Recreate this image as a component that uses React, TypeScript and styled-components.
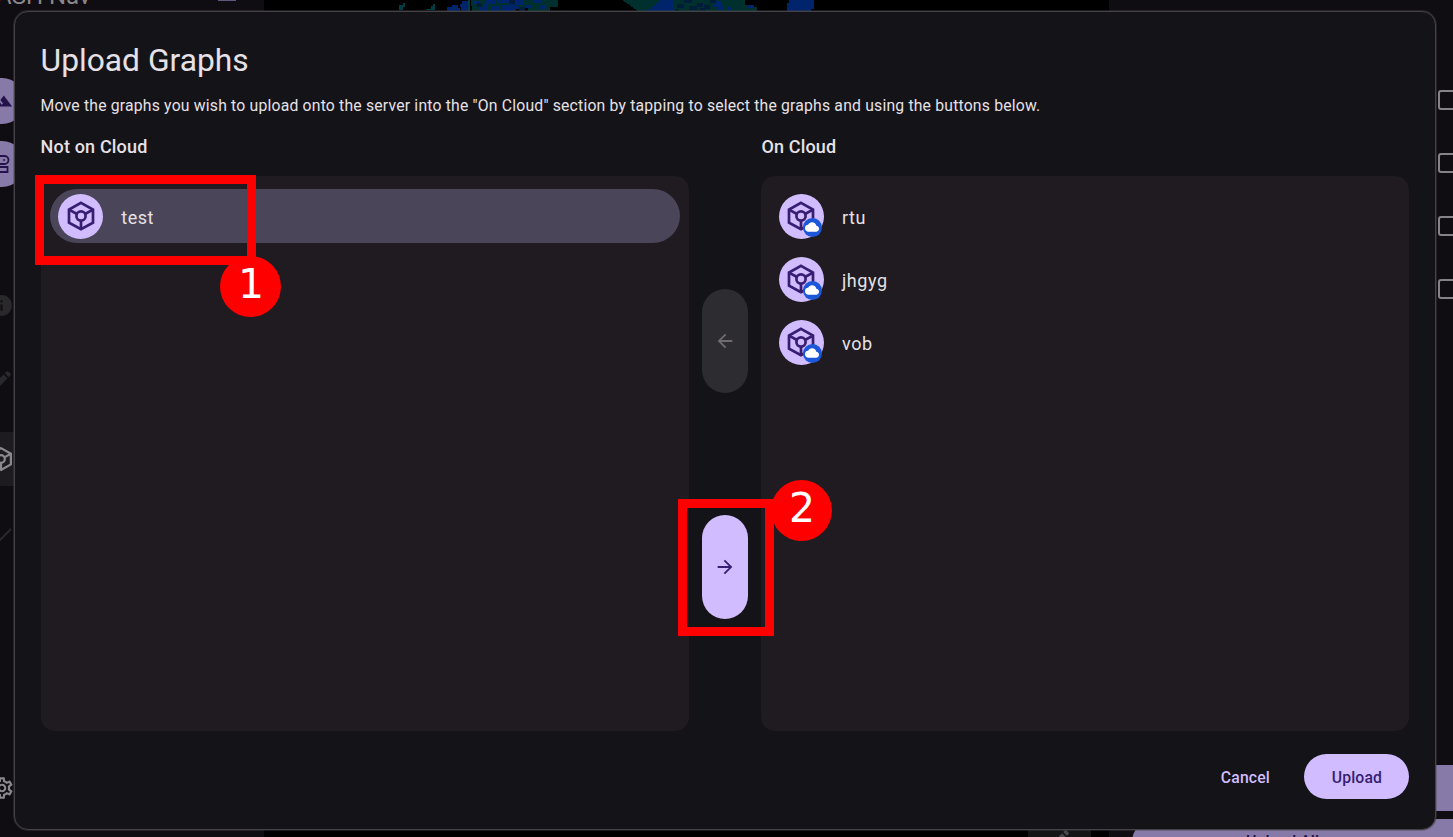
import React from "react";
import styled, { createGlobalStyle, css } from "styled-components";
import { MdCloud, MdEdit, MdInfo, MdLandscape, MdOutlineSettings, MdArrowBack, MdArrowForward } from "react-icons/md";

const GlobalStyle = createGlobalStyle`
  * { box-sizing: border-box; }
  html, body { margin: 0; background: #000; overflow: hidden; }
  body { font-family: Roboto, "Liberation Sans", sans-serif; color: #e6e1e6; }
`;

const Screen = styled.div`
  position: relative;
  width: 1453px;
  height: 837px;
  overflow: hidden;
  display: grid;
  grid-template-columns: 264px 845px 344px;
  grid-template-rows: 837px;
  background: #000;
`;

/* ---- Dimmed application behind the dialog ---- */

const Rail = styled.aside`
  display: flex;
  flex-direction: column;
  background: #0f0d11;
  overflow: hidden;
`;

const RailHeader = styled.header`
  display: flex;
  justify-content: space-between;
  align-items: flex-start;
  flex: none;
  height: 78px;
  padding-right: 28px;
`;

const AppName = styled.div`
  margin: -18px 0 0 -4px;
  font-size: 24px;
  line-height: 28px;
  color: #8a878b;
`;

const HeaderMark = styled.div`
  width: 18px;
  height: 1px;
  background: #605680;
`;

const RailSlot = styled.div<{ $h: number; $active?: boolean; $tone: string }>`
  display: flex;
  align-items: center;
  height: ${(p) => p.$h}px;
  color: ${(p) => p.$tone};
  background: ${(p) => (p.$active ? "#1d1b1f" : "transparent")};
  flex: none;
  svg { margin-left: ${(p) => (p.$active ? -13 : -11)}px; }
`;

const RailGap = styled.div<{ $h: number }>`
  height: ${(p) => p.$h}px;
  flex: none;
`;

const RailAvatar = styled.div`
  display: flex;
  align-items: center;
  justify-content: center;
  flex: none;
  width: 46px;
  height: 46px;
  margin: 0 0 17px -21px;
  border-radius: 50%;
  background: #877aa8;
  color: #24134a;
`;

const MapArea = styled.main`
  display: flex;
  flex-direction: column;
  justify-content: space-between;
  background: #000;
`;

const MapFooter = styled.div`
  display: flex;
  justify-content: flex-end;
  height: 8px;
  padding-right: 18px;
`;

const EditTab = styled.div`
  width: 63px;
  height: 8px;
  overflow: hidden;
  display: flex;
  justify-content: center;
  align-items: flex-start;
  background: #151515;
  color: #48484a;
  svg { flex: none; margin-top: -2px; }
`;

const SidePanel = styled.aside`
  display: flex;
  flex-direction: column;
  background: #0f0d11;
  overflow: hidden;
`;

const CheckList = styled.div`
  display: flex;
  flex-direction: column;
  flex: none;
  align-items: flex-end;
  gap: 43px;
  padding-top: 90px;
  height: 765px;
`;

const CheckBox = styled.div`
  width: 15px;
  height: 20px;
  border: 2px solid #858288;
  border-right: 0;
  border-radius: 3px 0 0 3px;
`;

const SideButton = styled.div`
  flex: none;
  height: 46px;
  margin: 0 0 8px 23px;
  padding-left: 114px;
  border-radius: 23px 0 0 23px;
  background: #877aa8;
  color: #24134a;
  font-size: 16px;
  font-weight: 500;
  line-height: 46px;
  white-space: nowrap;
`;

/* ---- Dialog ---- */

const Dialog = styled.section`
  position: absolute;
  left: 14px;
  top: 11px;
  width: 1422px;
  height: 819px;
  display: flex;
  flex-direction: column;
  padding: 30px 25.6px 29px 25.6px;
  border: 1px solid #444247;
  border-radius: 14px;
  box-shadow: 0 0 0 1px rgba(71, 69, 74, 0.4);
  background: #141318;
`;

const Title = styled.h1`
  margin: 0;
  font-size: 31.75px;
  line-height: 38px;
  font-weight: 400;
`;

const Lead = styled.p`
  margin: 16px 0 0;
  font-size: 15.75px;
  line-height: 20px;
  letter-spacing: 0.19px;
  white-space: nowrap;
`;

const Columns = styled.div`
  display: grid;
  grid-template-columns: 648px 72.8px 648px;
  grid-template-rows: 24px 555px;
  row-gap: 17px;
  margin-top: 19px;
`;

const ColumnTitle = styled.h2`
  margin: 0;
  font-size: 18px;
  line-height: 24px;
  font-weight: 500;
  letter-spacing: 0.17px;
`;

const List = styled.div`
  display: flex;
  flex-direction: column;
  gap: 9px;
  padding: 13px 9px;
  border-radius: 14px;
  background: #1f1b20;
`;

const Row = styled.div<{ $selected?: boolean }>`
  display: flex;
  align-items: center;
  gap: 18px;
  height: 54px;
  padding-left: 8.6px;
  border-radius: 27px;
  font-size: 18px;
  letter-spacing: 0.56px;
  background: ${(p) => (p.$selected ? "#4a4558" : "transparent")};
`;

const RowLabel = styled.span`
  padding-top: 2px;
`;

const Avatar = styled.div`
  position: relative;
  display: flex;
  align-items: center;
  justify-content: center;
  width: 45px;
  height: 45px;
  border-radius: 50%;
  background: #d0bcff;
  color: #381e72;
`;

const CloudBadge = styled.span`
  position: absolute;
  right: 2px;
  bottom: 2px;
  display: flex;
  align-items: center;
  justify-content: center;
  width: 19px;
  height: 19px;
  border-radius: 50%;
  background: #1b57d8;
  color: #fff;
`;

const Movers = styled.div`
  display: flex;
  flex-direction: column;
  align-items: center;
  justify-content: center;
  gap: 122px;
`;

const MoveButton = styled.button<{ $enabled?: boolean }>`
  display: flex;
  align-items: center;
  justify-content: center;
  width: 46px;
  height: 104px;
  padding: 0;
  border: 0;
  border-radius: 23px;
  ${(p) =>
    p.$enabled
      ? css`background: #d0bcff; color: #381e72;`
      : css`background: #2d2c31; color: #6d6b70;`}
`;

const Actions = styled.div`
  display: flex;
  justify-content: flex-end;
  gap: 7px;
  margin-top: 23px;
`;

const ActionButton = styled.button<{ $filled?: boolean }>`
  height: 45px;
  width: ${(p) => (p.$filled ? 105 : 104)}px;
  padding: 2px 0 0;
  border: 0;
  border-radius: 23px;
  font: 500 15.75px/43px Roboto, "Liberation Sans", sans-serif;
  letter-spacing: 0.15px;
  background: ${(p) => (p.$filled ? "#d0bcff" : "transparent")};
  color: ${(p) => (p.$filled ? "#381e72" : "#d0bcff")};
`;

/* ---- Tutorial callouts floating above the dialog ---- */

const Frame = styled.div<{ $x: number; $y: number; $w: number; $h: number }>`
  position: absolute;
  left: ${(p) => p.$x}px;
  top: ${(p) => p.$y}px;
  width: ${(p) => p.$w}px;
  height: ${(p) => p.$h}px;
  border: 9px solid #f00;
`;

const Step = styled.div<{ $x: number; $y: number }>`
  position: absolute;
  left: ${(p) => p.$x}px;
  top: ${(p) => p.$y}px;
  width: 61px;
  height: 61px;
  padding-left: 1px;
  border-radius: 50%;
  background: #f00;
  color: #fff;
  font-family: "DejaVu Sans", sans-serif;
  font-size: 41px;
  line-height: 56px;
  text-align: center;
`;

const CubeIcon = ({ size = 34 }: { size?: number }) => (
  <svg width={size} height={size} viewBox="0 0 34 34" fill="none" stroke="currentColor" strokeWidth="2.7">
    <path d="M17 3.8 29 10.6V23.6L17 30.2 5 23.6V10.6Z" />
    <circle cx="17" cy="17" r="4.6" />
    <path d="M5 10.6 13 15M29 10.6 21 15M17 21.6V30" />
  </svg>
);

const RobotIcon = () => (
  <svg width="22" height="22" viewBox="0 0 22 22" fill="none" stroke="currentColor" strokeWidth="1.8">
    <path d="M7 3H13.5A4 4 0 0 1 13.5 11H7A4 4 0 0 1 7 3ZM4 14H16.5V19H4Z" />
    <circle cx="13" cy="7" r="1" fill="currentColor" stroke="none" />
  </svg>
);

const MapCloud = () => (
  <svg width="845" height="12" viewBox="0 0 845 12" shapeRendering="crispEdges">
    <g fill="#00302d">
      <path d="M210 0H294V7H286V11H264V8H252V11H208V6H207V0Z" />
      <path d="M358 0H481V5H486V7H493V11H374Z" />
    </g>
    <g fill="#003c45">
      <path d="M135 5h4V3h2v4h-2v3h-4zM162 9h5V6h4v4h-9zM169 4h2v3h-2zM204 0h2v11h-2z" />
    </g>
    <g fill="#00246b">
      <path d="M183 7h5V5h6v3h2v3h-13zM196 4h2V1h6v10h-7V7h-1zM383 11V9h5V6h4V3h3V0h14v11zM523 3h2V0h25v9h-3v2h-24z" />
      <path d="M210 1h6v3h-6zM216 7h8v4h-8zM222 0h9v4h-7v3h-4v-3h2zM228 6h7v5h-7zM238 5h7v-2h6v3h4v3h-6v2h-11zM233 0h13v3h-13zM251 0h8v5h-8zM262 5h6v3h-6zM270 0h7v3h-7zM278 5h3v4h-6V6h3z" />
      <path d="M452 1h5v5h3v4h-7V7h-3V4h2zM463 7h5v4h-5zM484 5h6v3h-6z" />
    </g>
    <g fill="#001c38">
      <path d="M413 4h7v4h-7zM420 0h8v3h-8zM425 6h8v4h-8zM433 3h6v4h-6zM440 5h6v4h-6zM446 0h6v3h-6zM411 9h4v2h-4zM436 8h5v3h-5zM213 3h5v4h-5zM245 0h6v4h-6zM255 7h6v4h-6z" />
    </g>
  </svg>
);

const cloudGraphs = ["rtu", "jhgyg", "vob"];

export default function App() {
  return (
    <Screen>
      <GlobalStyle />
      <Rail>
        <RailHeader>
          <AppName>ASH Nav</AppName>
          <HeaderMark />
        </RailHeader>
        <RailAvatar><MdLandscape size={22} /></RailAvatar>
        <RailAvatar><RobotIcon /></RailAvatar>
        <RailGap $h={74} />
        <RailSlot $h={54} $tone="#29282b"><MdInfo size={25} /></RailSlot>
        <RailGap $h={21} />
        <RailSlot $h={54} $tone="#29282b"><MdEdit size={25} /></RailSlot>
        <RailGap $h={25} />
        <RailSlot $h={54} $tone="#8c898e" $active><CubeIcon size={28} /></RailSlot>
        <RailGap $h={22} />
        <RailSlot $h={54} $tone="#29282b">
          <svg width="24" height="24" viewBox="0 0 24 24" stroke="currentColor" strokeWidth="2"><path d="M5 23 22 6" /></svg>
        </RailSlot>
        <RailGap $h={199} />
        <RailSlot $h={54} $tone="#8c898e"><MdOutlineSettings size={26} /></RailSlot>
      </Rail>
      <MapArea>
        <MapCloud />
        <MapFooter><EditTab><MdEdit size={24} /></EditTab></MapFooter>
      </MapArea>
      <SidePanel>
        <CheckList>
          <CheckBox /><CheckBox /><CheckBox /><CheckBox />
        </CheckList>
        <SideButton />
        <SideButton>Upload All</SideButton>
      </SidePanel>

      <Dialog>
        <Title>Upload Graphs</Title>
        <Lead>
          Move the graphs you wish to upload onto the server into the "On Cloud" section by tapping to select the graphs
          and using the buttons below.
        </Lead>
        <Columns>
          <ColumnTitle>Not on Cloud</ColumnTitle>
          <span />
          <ColumnTitle>On Cloud</ColumnTitle>
          <List>
            <Row $selected>
              <Avatar><CubeIcon /></Avatar>
              <RowLabel>test</RowLabel>
            </Row>
          </List>
          <Movers>
            <MoveButton><MdArrowBack size={22} /></MoveButton>
            <MoveButton $enabled><MdArrowForward size={22} /></MoveButton>
          </Movers>
          <List>
            {cloudGraphs.map((name) => (
              <Row key={name}>
                <Avatar>
                  <CubeIcon />
                  <CloudBadge><MdCloud size={14} /></CloudBadge>
                </Avatar>
                <RowLabel>{name}</RowLabel>
              </Row>
            ))}
          </List>
        </Columns>
        <Actions>
          <ActionButton>Cancel</ActionButton>
          <ActionButton $filled>Upload</ActionButton>
        </Actions>
      </Dialog>

      <Frame $x={35} $y={175} $w={221} $h={90} />
      <Step $x={220} $y={256}>1</Step>
      <Frame $x={678} $y={499} $w={96} $h={137} />
      <Step $x={771} $y={480}>2</Step>
    </Screen>
  );
}
